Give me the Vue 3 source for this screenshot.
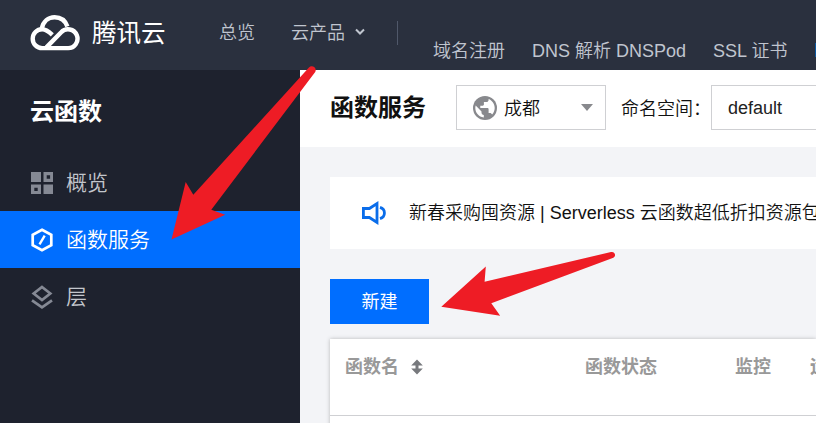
<script setup>
const products = ['域名注册', 'DNS 解析 DNSPod', 'SSL 证书']
</script>

<template>
  <div class="console">
    <header class="topbar">
      <svg class="logo" width="50" height="38" viewBox="0 0 50 38" fill="none" stroke="#fff" stroke-width="4.400">
        <path d="M11.800 14.500C13.300 7.500 18.300 3.300 24.600 3.300c6.200 0 10.800 3.600 12.800 9.300" />
        <path d="M22.300 20.900c-3.500-3.300-6-5.600-10.200-5.600a9.400 9.400 0 0 0 0 18.800h25.500a9.400 9.400 0 1 0-6.400-15.800L16.400 33.400" />
      </svg>
      <span class="brand">腾讯云</span>
      <span class="nav overview">总览</span>
      <span class="nav menu">云产品</span>
      <svg class="chevron" width="10" height="8" viewBox="0 0 10 8" fill="none" stroke="#c0c5cf" stroke-width="2"><path d="M1 1.500l4 4 4-4" /></svg>
      <i class="divider"></i>
      <nav class="products">
        <span v-for="item in products" :key="item">{{ item }}</span>
        <i class="tag"></i>
      </nav>
    </header>
    <div class="body">
      <aside class="sidebar">
        <h2>云函数</h2>
        <div class="item">
          <svg width="24" height="24" viewBox="0 0 24 24" fill="#858994">
            <path d="M1 1h10v10H1zM13.500 13.500h9.500v9.500h-9.500z" />
            <path fill-rule="evenodd" d="M13.500 1H23v10h-9.500zM16.700 4.300v3.400h3.400V4.300zM1 13.500h10V23H1zM4.300 16.700v3.400h3.400v-3.400z" />
          </svg>
          <span>概览</span>
        </div>
        <div class="item active">
          <svg width="24" height="24" viewBox="0 0 24 24" fill="none" stroke="#fff" stroke-width="2.700">
            <path d="M12 1.800l9.300 5.100v10.200L12 22.200l-9.300-5.100V6.900z" />
            <path d="M14.700 7.700l-5.200 8.600" stroke-width="2.400" />
          </svg>
          <span>函数服务</span>
        </div>
        <div class="item">
          <svg width="24" height="24" viewBox="0 0 24 24" fill="none" stroke="#858994" stroke-width="2.700">
            <path d="M12 2l8.300 6.500L12 15 3.700 8.500z" />
            <path d="M2 15.300l10 7 10-7" />
          </svg>
          <span>层</span>
        </div>
      </aside>
      <main class="main">
        <div class="titlebar">
          <h1>函数服务</h1>
          <div class="region">
            <svg width="24" height="24" viewBox="0 0 24 24">
              <circle cx="12" cy="12" r="12" fill="#88898d" />
              <path fill="#fff" d="M2.700 9.500l5.800 5.900v1.200c0 1.400 1 2.400 2.300 2.400v2.500C5.900 20.900 2.300 16.900 2.300 12c0-.900.100-1.700.4-2.500z" />
              <path fill="#fff" d="M15.600 3.100c3.600 1.400 6.100 4.900 6.100 8.900 0 2.500-1 4.900-2.600 6.600-.4-1.100-1.200-1.700-2.300-1.700h-1.200v-3.500c0-.8-.5-1.300-1.200-1.300H7.300V9.700h2.400c.7 0 1.200-.5 1.200-1.200V6.100h2.300c1.400 0 2.400-1 2.400-2.400z" />
            </svg>
            <span>成都</span>
            <i class="caret"></i>
          </div>
          <span class="label">命名空间：</span>
          <div class="namespace">default</div>
        </div>
        <div class="content">
          <div class="notice">
            <svg width="26" height="24" viewBox="0 0 26 24" fill="none" stroke="#0a6dea" stroke-width="2.800">
              <path d="M2.400 7.500h6L16 2.600v18.800l-7.600-4.900h-6z" />
              <path d="M19 6.400c5.900 1.800 5.900 9.400 0 11.200" />
            </svg>
            <span>新春采购囤资源 | Serverless 云函数超低折扣资源包</span>
          </div>
          <button class="create">新建</button>
          <div class="table">
            <div class="thead">
              <div class="cell name">
                函数名
                <svg width="12" height="16" viewBox="0 0 12 16" fill="#77797d"><path d="M6 .5L11.800 6.400H7.500v3.200h4.300L6 15.500.2 9.600h4.300V6.400H.2z" /></svg>
              </div>
              <div class="cell status">函数状态</div>
              <div class="cell monitor">监控</div>
              <div class="cell">运</div>
            </div>
          </div>
        </div>
      </main>
    </div>
    <svg class="arrows" width="816" height="423" viewBox="0 0 816 423" fill="#ee1c25">
      <path d="M171.500 239.500L185.700 182l7.600 12.700L308.500 68c3-4 9-.2 6.700 4L211.300 209.700l13.900 5z" />
      <path d="M441.300 306.800l44.500-40.300-1.200 15.300L611 252c4.400-.8 5.600 4.600 1.700 6L491.300 303.300l8.900 12.500z" />
    </svg>
  </div>
</template>

<style>
body { margin: 0; overflow: hidden; }
</style>

<style scoped>
.console {
  position: relative;
  width: 816px;
  height: 423px;
  overflow: hidden;
  font-family: "Liberation Sans", "Noto Sans CJK SC", sans-serif;
  font-size: 18px;
  color: #111;
  white-space: nowrap;
}
.console * { box-sizing: border-box; }
svg { display: block; flex: none; }
.topbar {
  display: flex;
  align-items: center;
  height: 70px;
  padding: 0 0 4px 30px;
  background: #2a303e;
  color: #c0c5cf;
}
.topbar > *, .titlebar > *, .cell, .region > * { flex: none; }
.brand {
  width: 127px;
  padding: 1px 0 0 12px;
  font-size: 24.5px;
  color: #fff;
  line-height: 36px;
}
.nav { line-height: 28px; padding-bottom: 1px; font-weight: 350; }
.overview { width: 84px; padding-left: 12px; }
.menu { width: 64px; }
.chevron { margin-bottom: 2px; }
.divider { width: 1px; height: 24px; margin: 0 35px 0 32px; background: #50586a; }
.products {
  display: flex;
  gap: 27px;
  align-items: center;
  padding-top: 36px;
  line-height: 28px;
  font-weight: 350;
}
.products > * { flex: none; }
.tag { width: 10px; height: 14px; margin: -2px 0 0 1px; background: #0b579f; }
.body { display: flex; height: 353px; }
.sidebar { flex: none; width: 300px; background: #1e222e; color: #c3c6cc; }
h1, h2 { margin: 0; font-size: 24px; font-weight: 700; }
h2 { height: 84px; padding: 23px 0 0 30px; line-height: 38px; color: #fff; }
.item {
  display: flex;
  align-items: center;
  gap: 12px;
  height: 57px;
  padding-left: 30px;
  font-size: 21px;
  font-weight: 350;
}
.item span { padding-bottom: 3px; }
.active { background: #006eff; color: #fff; }
.main { flex: none; width: 516px; background: #f3f4f7; overflow: hidden; }
.titlebar { display: flex; align-items: center; height: 77px; padding: 0 0 2px 30px; background: #fff; }
h1 { width: 126px; line-height: 38px; }
.region {
  display: flex;
  align-items: center;
  width: 150px;
  height: 45px;
  padding-left: 16px;
  border: 1px solid #cfd0d3;
  font-weight: 350;
}
.region span { width: 84px; padding: 0 0 2px 7px; }
.caret { border: 6px solid transparent; border-top: 7px solid #88898d; border-bottom: 0; }
.label { width: 105px; padding: 0 0 2px 15px; font-weight: 350; }
.namespace { width: 150px; height: 45px; padding-left: 16px; border: 1px solid #cfd0d3; line-height: 44px; color: #222; }
.content { padding: 30px 0 0 30px; }
.notice {
  display: flex;
  align-items: center;
  gap: 22px;
  height: 72px;
  padding-left: 31px;
  background: #fff;
  color: #111;
  font-weight: 350;
}
.notice span { padding-bottom: 5px; }
.create {
  display: block;
  width: 99px;
  height: 45px;
  margin: 30px 0 15px;
  padding: 0 0 3px;
  border: 0;
  background: #006eff;
  color: #fff;
  font: inherit;
}
.table { height: 90px; background: #fff; box-shadow: 0 0 4px rgba(0, 0, 0, 0.25); }
.thead { display: flex; height: 77px; padding: 14px 0 0 15px; border-bottom: 1px solid #cfd0d3; }
.cell { line-height: 28px; color: #999; font-weight: 700; }
.name { display: flex; align-items: center; gap: 12px; width: 240px; height: 28px; }
.status { width: 150px; }
.monitor { width: 75px; }
.arrows { position: absolute; top: 0; left: 0; }
</style>
